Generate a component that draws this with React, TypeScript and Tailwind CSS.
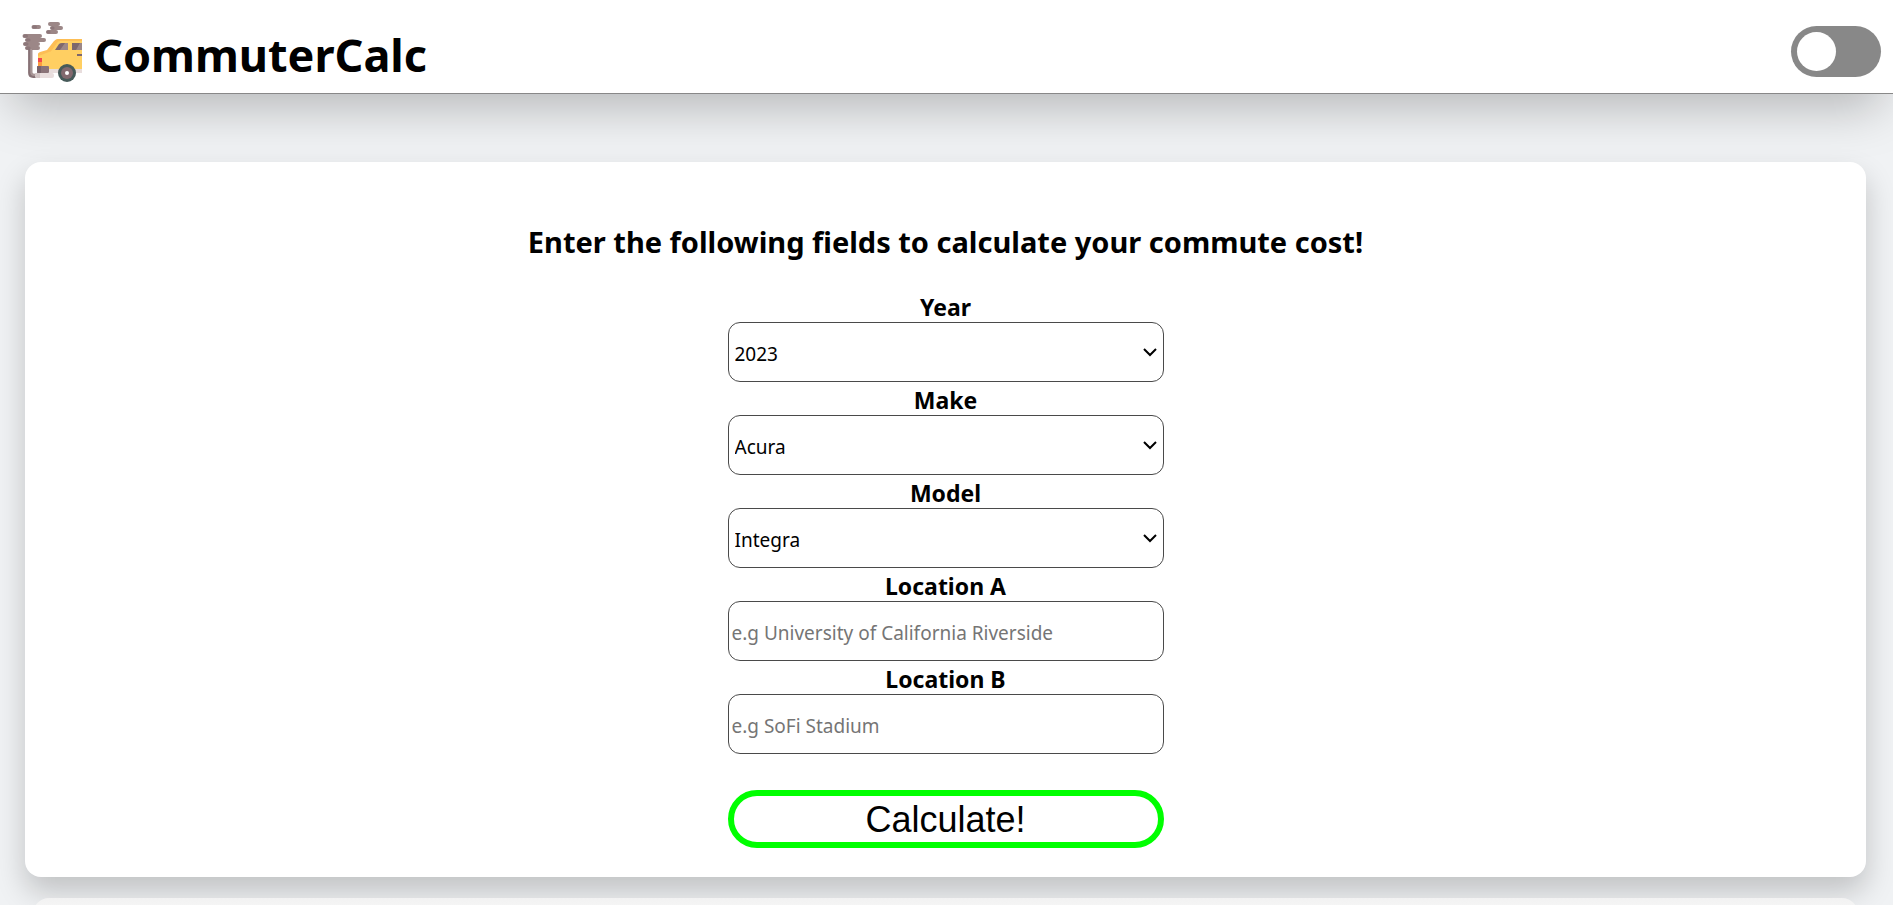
import React, { useState } from 'react';

const vehicles: Record<string, string[]> = {
  Acura: ['Integra', 'MDX', 'RDX', 'TLX'],
  Honda: ['Accord', 'Civic', 'CR-V'],
  Toyota: ['Camry', 'Corolla', 'RAV4'],
};

const controlClass =
  'h-[60px] w-full rounded-xl border border-[#4a4a4a] bg-white text-[19px] outline-none';

function CarLogo() {
  return (
    <svg viewBox="0 0 60 60" className="size-[60px] shrink-0" aria-hidden="true">
      <g fill="none" stroke="#9c8787" strokeLinecap="round" strokeWidth="4">
        <path d="M11.5 5h5.5M28 2h8M30 6h9M26 10h8" />
        <path d="M2.5 14h15.5M5 18h17M3 22h13M5 26h11" />
      </g>
      <path d="M11.5 5h2M30 6h1M26 10h1M2.5 14h2M5 18h2M3 22h2M5 26h2" fill="none" stroke="#8c777a" strokeLinecap="round" strokeWidth="3" />
      <path d="M8.2 27v24q0 2.8 3 2.8H14" fill="none" stroke="#877276" strokeWidth="4.2" />
      <path d="M9.2 27v23q0 3 3 3H14" fill="none" stroke="#a89696" strokeWidth="2" />
      <rect x="13" y="51" width="19" height="5" rx="2" fill="#e8dddd" />
      <path d="M13 51h5v5h-3q-2 0-2-2z" fill="#d3c6c6" />
      <path d="M27 47h33v4H27z" fill="#e8dddd" />
      <path d="M16 47V33q0-2 2-2l8-2 8-11q1-1 3-1h23v30z" fill="#ffcf62" />
      <path d="M16 34v-2q0-1 2-2l7-2 7-9q2-2 4-2h24v2H38q-2 0-3 2l-5 7q-1 2-3 2l-8 3z" fill="#fdbe55" />
      <path d="m33 28 4-6q1-1 3-1h6v7zM50 28v-7h10v7z" fill="#7d676d" />
      <path d="m38 28 5-7h3v7zM54 28l4-7h2v7z" fill="#9c8787" />
      <path d="M55 32h5v2h-5z" fill="#7d676d" />
      <path d="M16 36h4v4h-4z" fill="#f2484b" />
      <path d="M16 40h4v4h-4z" fill="#fd9a3f" />
      <rect x="15" y="44" width="12" height="7" rx="1" fill="#8a7378" />
      <path d="M15 45q0-1 1-1h3v7h-3q-1 0-1-1z" fill="#77636a" />
      <circle cx="45" cy="51" r="9" fill="#465a59" />
      <circle cx="45" cy="51" r="6" fill="#82696e" />
      <circle cx="45" cy="51" r="2" fill="#fff" />
    </svg>
  );
}

function Field({ id, label, children }: { id: string; label: string; children: React.ReactNode }) {
  return (
    <div className="flex flex-col">
      <label htmlFor={id} className="h-[33px] text-center text-[23px] leading-[36px] font-bold">
        {label}
      </label>
      {children}
    </div>
  );
}

function SelectField(props: {
  id: string;
  label: string;
  value: string;
  options: string[];
  onChange: (value: string) => void;
}) {
  return (
    <Field id={props.id} label={props.label}>
      <div className="relative">
        <select
          id={props.id}
          value={props.value}
          onChange={(e) => props.onChange(e.target.value)}
          className={`${controlClass} appearance-none pt-1 pl-1.5`}
        >
          {props.options.map((o) => (
            <option key={o}>{o}</option>
          ))}
        </select>
        <svg
          viewBox="0 0 14 9"
          className="pointer-events-none absolute top-[26px] right-[7px] h-[9px] w-[14px]"
          aria-hidden="true"
        >
          <path d="m1 1 6 6 6-6" fill="none" stroke="#000" strokeWidth="2" />
        </svg>
      </div>
    </Field>
  );
}

export default function App() {
  const [dark, setDark] = useState(false);
  const [year, setYear] = useState('2023');
  const [make, setMake] = useState('Acura');
  const [model, setModel] = useState('Integra');

  return (
    <div className="flex h-screen flex-col overflow-hidden bg-[#f0f2f4] font-['Noto_Sans',sans-serif] text-black">
      <header className="flex h-[94px] shrink-0 items-center justify-between border-b border-[#888] bg-white pr-3 pl-[22px] shadow-[0_25px_50px_-12px_rgba(0,0,0,0.25)]">
        <div className="flex items-center gap-3 pt-2.5">
          <CarLogo />
          <h1 className="pt-1.5 text-[45px] leading-[60px] font-bold">CommuterCalc</h1>
        </div>
        <label className="relative mt-2.5 flex h-[51px] w-[90px] cursor-pointer rounded-full bg-[#888] p-1.5">
          <input
            type="checkbox"
            aria-label="Dark mode"
            checked={dark}
            onChange={(e) => setDark(e.target.checked)}
            className="peer absolute inset-0 cursor-pointer appearance-none"
          />
          <span className="size-[39px] rounded-full bg-white peer-checked:ml-auto" />
        </label>
      </header>

      <main className="flex flex-col pt-[68px] pr-[27px] pl-[25px]">
        <section className="flex shrink-0 flex-col items-center rounded-2xl bg-white pt-[60px] pb-[29px] shadow-[0_15px_30px_rgba(0,0,0,0.2)]">
          <h2 className="text-[29px] leading-[40px] font-bold">
            Enter the following fields to calculate your commute cost!
          </h2>
          <form className="mt-[27px] flex w-[436px] max-w-full flex-col" onSubmit={(e) => e.preventDefault()}>
            <SelectField id="year" label="Year" value={year} options={['2023', '2022', '2021', '2020']} onChange={setYear} />
            <SelectField
              id="make"
              label="Make"
              value={make}
              options={Object.keys(vehicles)}
              onChange={(value) => {
                setMake(value);
                setModel(vehicles[value][0]);
              }}
            />
            <SelectField id="model" label="Model" value={model} options={vehicles[make]} onChange={setModel} />
            <Field id="location-a" label="Location A">
              <input
                id="location-a"
                type="text"
                placeholder="e.g University of California Riverside"
                className={`${controlClass} pt-1 pl-[3px] placeholder:text-[#757575]`}
              />
            </Field>
            <Field id="location-b" label="Location B">
              <input
                id="location-b"
                type="text"
                placeholder="e.g SoFi Stadium"
                className={`${controlClass} pt-1 pl-[3px] placeholder:text-[#757575]`}
              />
            </Field>
            <button
              type="submit"
              className="mt-9 h-[58px] rounded-full border-6 border-[#00ff00] bg-white pt-px font-['Liberation_Sans',sans-serif] text-[36px] leading-[46px]"
            >
              Calculate!
            </button>
          </form>
        </section>
        <section className="mx-2 mt-[21px] h-40 shrink-0 rounded-2xl bg-linear-to-b from-[#f2f2f2] to-white to-20%" />
      </main>
    </div>
  );
}
